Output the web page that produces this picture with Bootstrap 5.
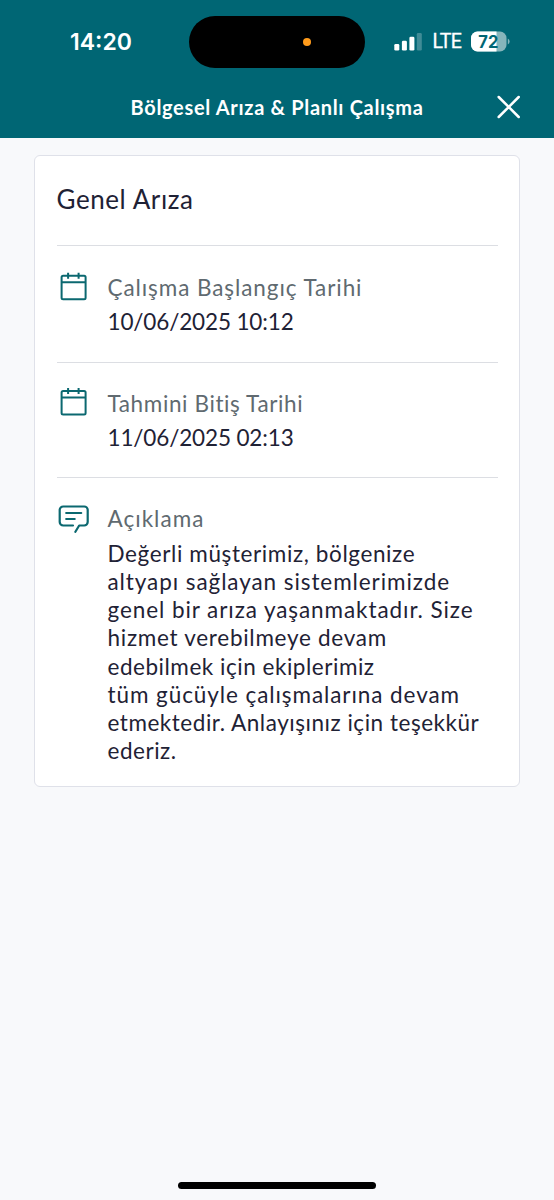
<!DOCTYPE html>
<html lang="tr">
<head>
<meta charset="utf-8">
<meta name="viewport" content="width=device-width, initial-scale=1">
<title>Bölgesel Arıza &amp; Planlı Çalışma</title>
<link href="https://cdn.jsdelivr.net/npm/bootstrap@5.3.0/dist/css/bootstrap.min.css" rel="stylesheet">
<script src="https://cdn.jsdelivr.net/npm/bootstrap@5.3.0/dist/js/bootstrap.bundle.min.js" defer></script>
<style>
body{font-family:Lato,"Liberation Sans",sans-serif;background:#f8f9fb;color:#1f2235;height:1200px;font-variant-ligatures:none}
.app-head{background:#006674;height:137.5px}
.status-row{height:84px;padding-left:70px}
.clock{font:600 23px/1 Inter,sans-serif;width:119px}
.island{width:176px;height:52px;background:#000}
.island i{width:8px;height:8px;background:#ff9b1b;margin-right:54px}
.signal{margin-left:29px}
.lte{font:400 19.5px/1 Roboto,sans-serif;letter-spacing:-.6px;margin:0 0 0 10.5px;width:38.5px;-webkit-text-stroke:.3px #fff}
.battery text{font:700 17px Inter,sans-serif}
.title-row{height:46px;padding:0 32px 0 130.5px}
.page-title{font-size:20px;font-weight:700;line-height:1;letter-spacing:.68px}
.notice{margin:17px 34px 0;height:632px;border:1.5px solid #dfe1e9;border-radius:6px;padding:0 21.5px}
.notice-title{font-size:26px;line-height:32px;padding:27px 0 30.5px;font-weight:400;letter-spacing:.58px}
.entry{border-top:1px solid #dcdee3;height:116.5px;padding-top:28px}
.entry + .entry{height:115.7px;padding-top:27px}
.entry + .entry-last{height:auto}
.entry-icon{width:51px;margin-top:-2.5px}
.entry-icon svg{display:block}
.fld{font-size:22.5px;line-height:28.25px}
.lbl{color:#606a70;margin-bottom:6.2px}
.ls-n{letter-spacing:-.14px}
.ls-5{letter-spacing:.53px}
.ls-6{letter-spacing:.61px}
.ls-7{letter-spacing:.72px}
.ls-9{letter-spacing:.92px}
.ls-10{letter-spacing:1.02px}
.home-bar{width:198px;height:7px;background:#000;margin-bottom:11.5px}
</style>
</head>
<body class="d-flex flex-column overflow-hidden">
<header class="app-head text-white">
  <div class="status-row d-flex align-items-center">
    <span class="clock">14:20</span>
    <div class="island rounded-pill d-flex align-items-center justify-content-end"><i class="rounded-circle"></i></div>
    <svg class="signal" width="28" height="20" viewBox="0 0 28 20" fill="#fff" aria-hidden="true">
      <rect x="0.3" y="12" width="5" height="6.5" rx="1.3"/><rect x="7.9" y="8.8" width="5" height="9.7" rx="1.3"/>
      <rect x="15.4" y="4.7" width="5" height="13.8" rx="1.3"/><rect x="22.8" y="1" width="5" height="17.5" rx="1.3" opacity=".25"/>
    </svg>
    <span class="lte">LTE</span>
    <svg class="battery" width="40" height="22" viewBox="0 0 40 22" aria-label="72%">
      <defs><clipPath id="cell"><rect y="0.5" width="35.5" height="20" rx="6.5"/></clipPath></defs>
      <g clip-path="url(#cell)"><rect width="36" height="22" fill="#86b5bb"/><rect width="25.5" height="22" fill="#fff"/></g>
      <path d="M36.8 7.5q1.8 .8 1.8 3t-1.8 3z" fill="#86b5bb"/>
      <text x="17.3" y="16.6" text-anchor="middle" fill="#006674" textLength="20" lengthAdjust="spacingAndGlyphs">72</text>
    </svg>
  </div>
  <div class="title-row d-flex align-items-center justify-content-between">
    <h1 class="page-title mb-0 text-nowrap">Bölgesel Arıza &amp; Planlı Çalışma</h1>
    <svg width="26" height="26" viewBox="0 0 26 26" fill="none" stroke="#fff" stroke-width="2.5" stroke-linecap="round" aria-label="Kapat"><path d="M2.7 3l20 20M22.7 3l-20 20"/></svg>
  </div>
</header>

<main class="notice card">
  <h2 class="notice-title mb-0">Genel Arıza</h2>

  <section class="entry d-flex">
    <div class="entry-icon flex-shrink-0">
      <svg width="32" height="30" viewBox="0 0 32 30" fill="none" stroke="#0b6870" stroke-width="2"><rect x="4.6" y="3.7" width="24" height="23.5" rx="1.5"/><path d="M4.6 10.2h24M11.1 .7v6M21.6 .7v6"/></svg>
    </div>
    <div class="fld">
      <div class="lbl ls-9">Çalışma Başlangıç Tarihi</div>
      <div class="ls-n">10/06/2025 10:12</div>
    </div>
  </section>

  <section class="entry d-flex">
    <div class="entry-icon flex-shrink-0">
      <svg width="32" height="30" viewBox="0 0 32 30" fill="none" stroke="#0b6870" stroke-width="2"><rect x="4.6" y="4" width="24" height="23.5" rx="1.5"/><path d="M4.6 10.5h24M11.1 1v6M21.6 1v6"/></svg>
    </div>
    <div class="fld">
      <div class="lbl ls-6">Tahmini Bitiş Tarihi</div>
      <div class="ls-n">11/06/2025 02:13</div>
    </div>
  </section>

  <section class="entry entry-last d-flex">
    <div class="entry-icon flex-shrink-0">
      <svg width="34" height="32" viewBox="0 0 34 32" fill="none" stroke="#0b6870" stroke-width="2.2" stroke-linecap="round" stroke-linejoin="round"><path d="M16 22.5H6.2a3.5 3.5 0 0 1-3.5-3.5V7a3.5 3.5 0 0 1 3.5-3.5h21A3.5 3.5 0 0 1 30.700 7v12a3.5 3.5 0 0 1-3.5 3.5h-5l-3.8 6.300M9.2 10h15M9.2 16h8.5"/></svg>
    </div>
    <div class="fld text-nowrap">
      <div class="lbl ls-10">Açıklama</div>
      <p class="mb-0">
        <span class="d-block ls-6">Değerli müşterimiz, bölgenize</span>
        <span class="d-block ls-9">altyapı sağlayan sistemlerimizde</span>
        <span class="d-block ls-9">genel bir arıza yaşanmaktadır. Size</span>
        <span class="d-block ls-7">hizmet verebilmeye devam</span>
        <span class="d-block ls-5">edebilmek için ekiplerimiz</span>
        <span class="d-block ls-9">tüm gücüyle çalışmalarına devam</span>
        <span class="d-block ls-5">etmektedir. Anlayışınız için teşekkür</span>
        <span class="d-block ls-5">ederiz.</span>
      </p>
    </div>
  </section>
</main>

<div class="home-bar rounded-pill mt-auto mx-auto"></div>
</body>
</html>
